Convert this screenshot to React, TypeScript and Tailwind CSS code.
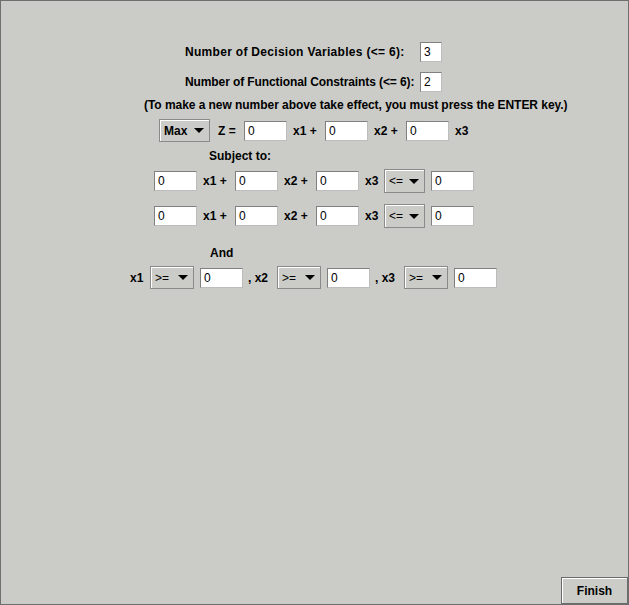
import React from "react";

const font = { fontFamily: '"Liberation Sans", Arial, sans-serif' };

function Field({ value, w = "w-[43px]" }: { value: string; w?: string }) {
  return (
    <div
      className={`${w} h-[20px] border border-t-[#808080] border-l-[#808080] border-r-[#bdbdbd] border-b-[#bdbdbd] bg-white pl-[3px] text-[12px] leading-[18px] text-black`}
    >
      {value}
    </div>
  );
}

function Combo({ label, w, h = "h-[23px]", bold = false }: { label: string; w: string; h?: string; bold?: boolean }) {
  return (
    <div
      className={`${w} ${h} flex items-center justify-between border border-[#8a8a8a] bg-[#cbccc8] pl-[4px] pr-[5px] shadow-[inset_1px_1px_0_#ffffff]`}
    >
      <span className={`text-[12px] ${bold ? "font-bold" : "font-normal"}`}>{label}</span>
      <svg width="10" height="5" viewBox="0 0 10 5">
        <path d="M0 0h10L5 5z" fill="#000" />
      </svg>
    </div>
  );
}

function Label({ children, className = "" }: { children: React.ReactNode; className?: string }) {
  return <span className={`text-[12px] font-bold whitespace-nowrap ${className}`}>{children}</span>;
}

export default function App() {
  return (
    <div
      className="relative h-[605px] w-[629px] overflow-hidden border border-[#6e6e6e] bg-[#cbccc8] text-black"
      style={font}
    >
      <div className="flex flex-col pt-[41px]">
        <div className="flex h-[20px] items-center">
          <Label className="ml-[184px] w-[235px] tracking-[0.3px]">Number of Decision Variables (&lt;= 6):</Label>
          <Field value="3" w="w-[22px]" />
        </div>
        <div className="mt-[10px] flex h-[20px] items-center">
          <Label className="ml-[184px] w-[235px] tracking-[-0.1px]">Number of Functional Constraints (&lt;= 6):</Label>
          <Field value="2" w="w-[22px]" />
        </div>
        <div className="mt-[4px] flex h-[18px] items-center">
          <Label className="ml-[143px] tracking-[-0.05px]">(To make a new number above take effect, you must press the ENTER key.)</Label>
        </div>
        <div className="mt-[5px] flex h-[23px] items-center">
          <div className="ml-[158px]">
            <Combo label="Max" w="w-[51px]" bold />
          </div>
          <Label className="ml-[8px] w-[26px]">Z =</Label>
          <Field value="0" />
          <Label className="ml-[6px] w-[32px]">x1 +</Label>
          <Field value="0" />
          <Label className="ml-[6px] w-[32px]">x2 +</Label>
          <Field value="0" />
          <Label className="ml-[6px]">x3</Label>
        </div>
        <div className="mt-[6px] flex h-[16px] items-center">
          <Label className="ml-[208px]">Subject to:</Label>
        </div>
        {[0, 1].map((i) => (
          <div key={i} className={`${i === 0 ? "mt-[5px]" : "mt-[11px]"} flex h-[24px] items-center`}>
            <div className="ml-[153px]">
              <Field value="0" />
            </div>
            <Label className="ml-[6px] w-[32px]">x1 +</Label>
            <Field value="0" />
            <Label className="ml-[6px] w-[32px]">x2 +</Label>
            <Field value="0" />
            <Label className="ml-[6px] w-[19px]">x3</Label>
            <Combo label="<=" w="w-[41px]" h="h-[24px]" />
            <div className="ml-[6px]">
              <Field value="0" />
            </div>
          </div>
        ))}
        <div className="mt-[17px] flex h-[16px] items-center">
          <Label className="ml-[209px]">And</Label>
        </div>
        <div className="mt-[5px] flex h-[23px] items-center">
          <Label className="ml-[129px] w-[20px]">x1</Label>
          <Combo label=">=" w="w-[44px]" />
          <div className="ml-[6px]">
            <Field value="0" />
          </div>
          <Label className="ml-[5px] w-[29px]">, x2</Label>
          <Combo label=">=" w="w-[44px]" />
          <div className="ml-[6px]">
            <Field value="0" />
          </div>
          <Label className="ml-[5px] w-[29px]">, x3</Label>
          <Combo label=">=" w="w-[44px]" />
          <div className="ml-[6px]">
            <Field value="0" />
          </div>
        </div>
      </div>
      <div className="absolute bottom-0 right-0">
        <button className="h-[27px] w-[67px] border border-[#6a6a6a] bg-[#cbccc8] text-[12px] font-bold shadow-[inset_1px_1px_0_#ffffff]">
          Finish
        </button>
      </div>
    </div>
  );
}
